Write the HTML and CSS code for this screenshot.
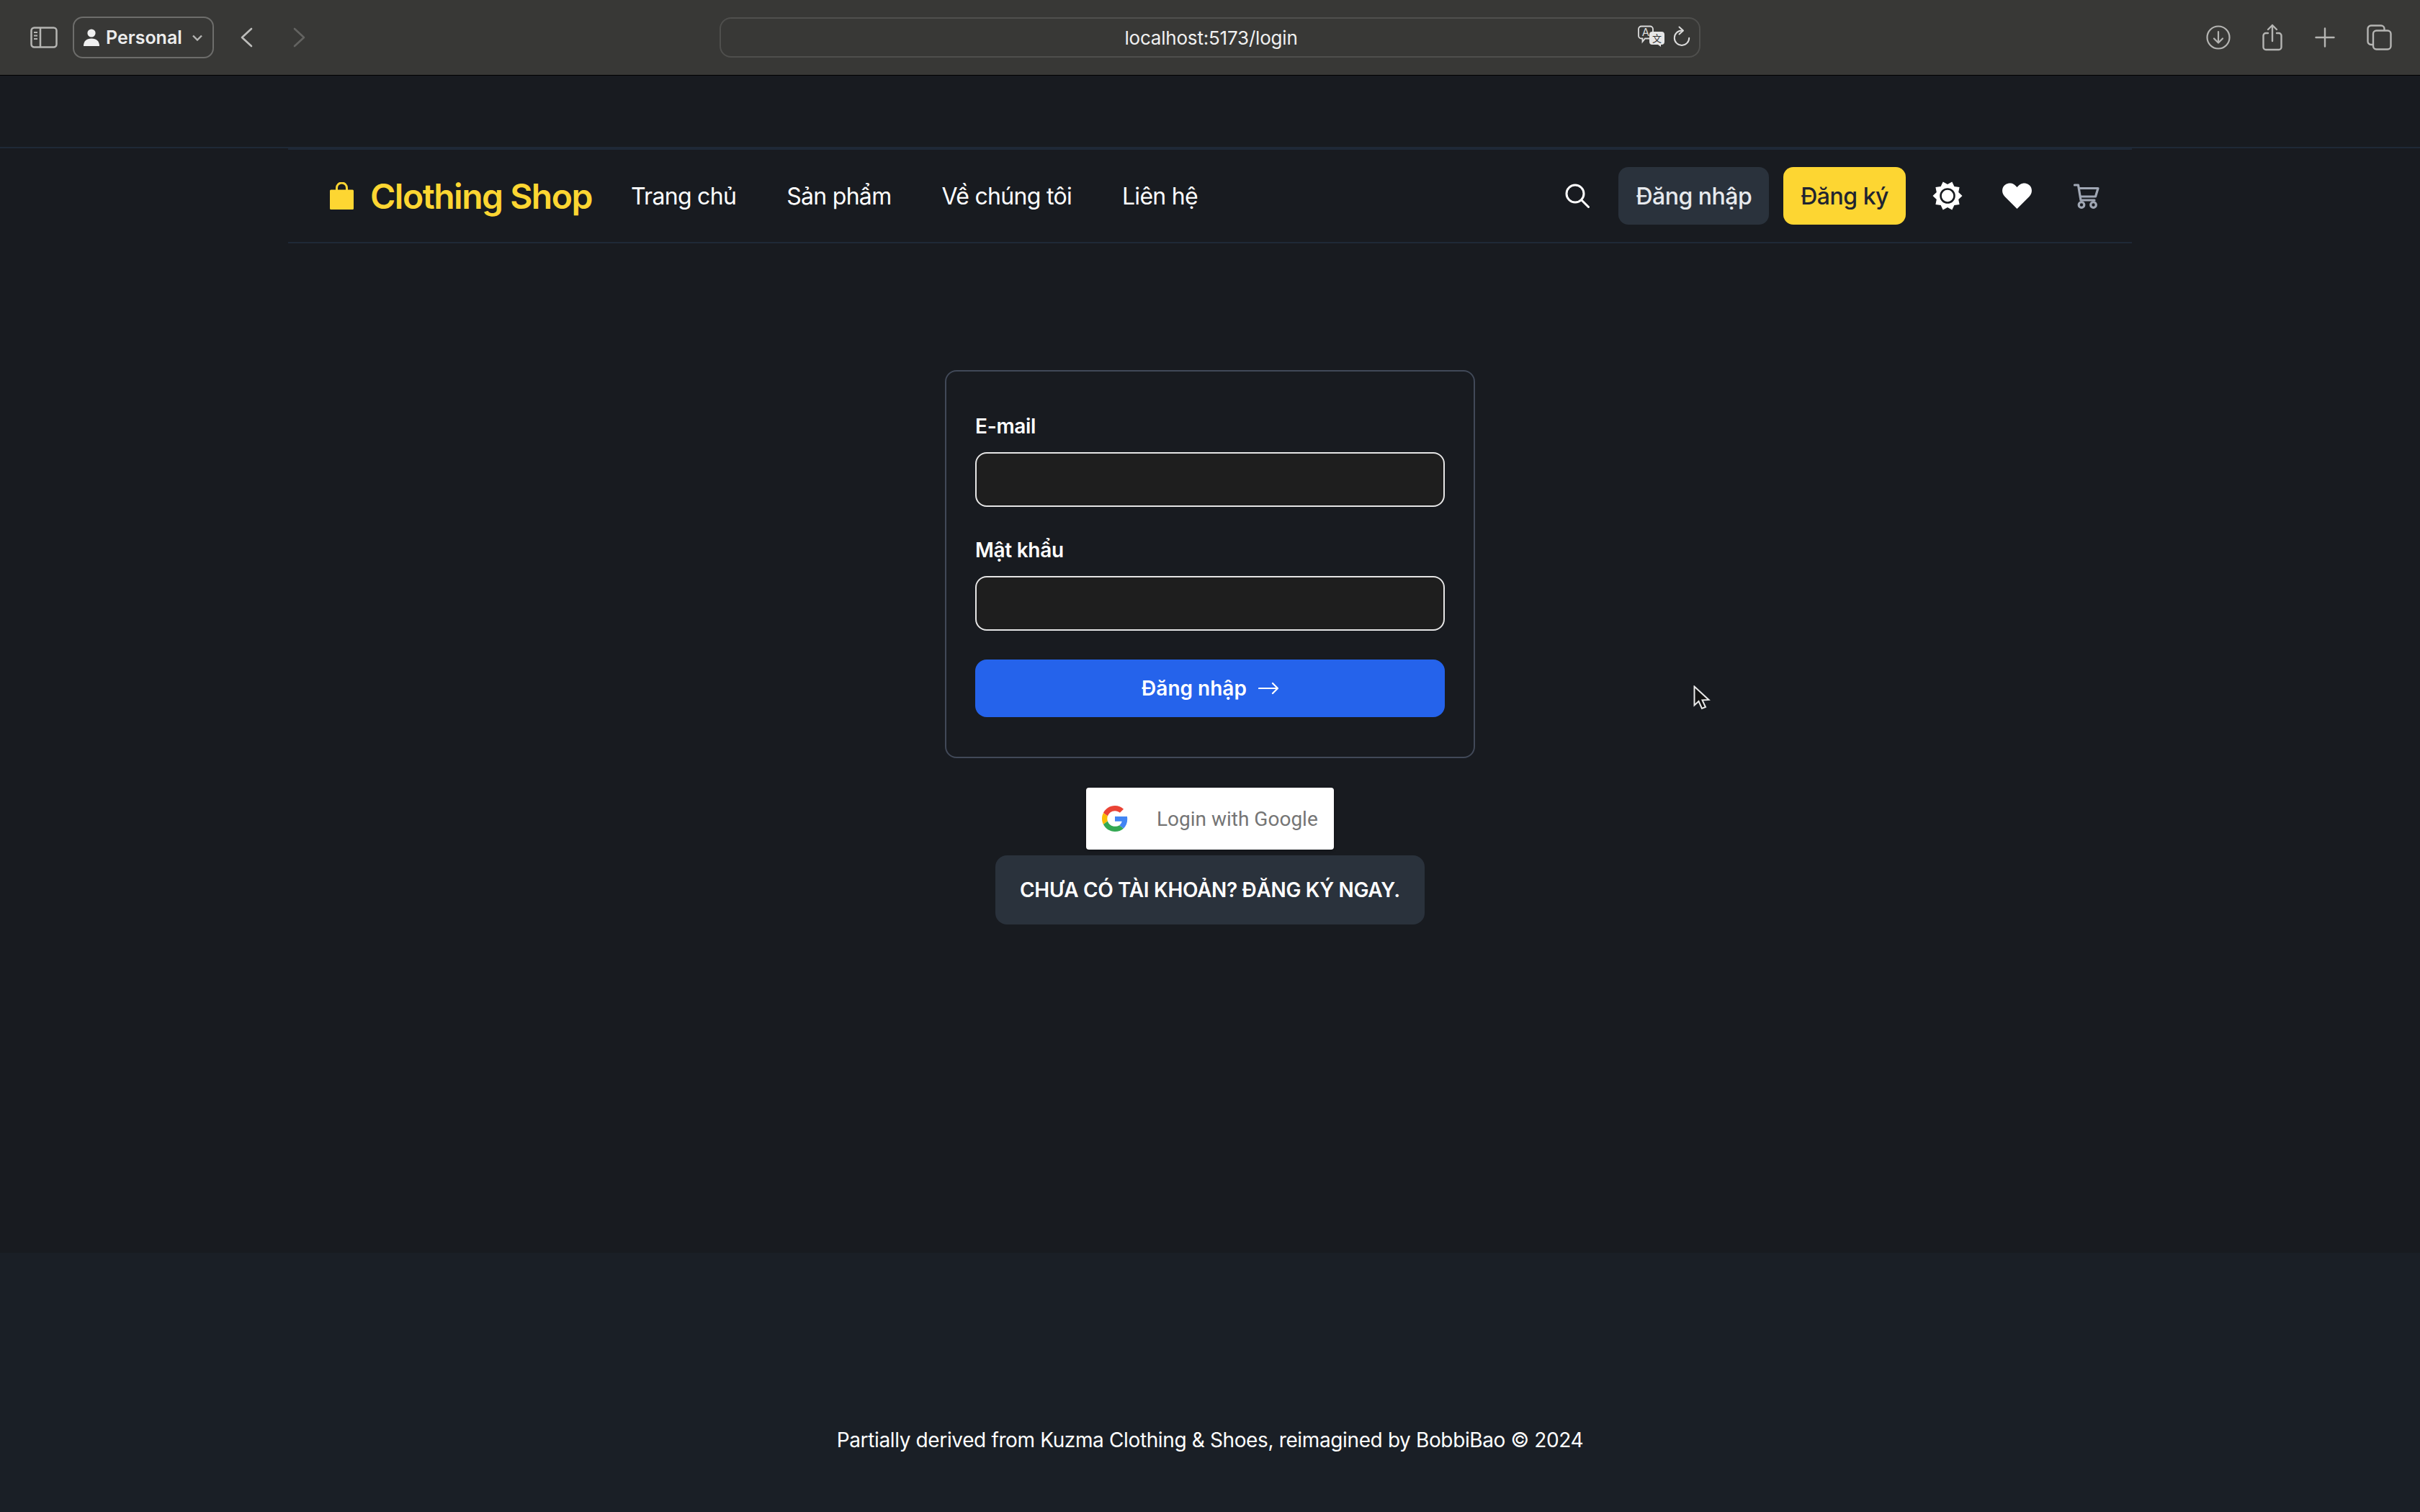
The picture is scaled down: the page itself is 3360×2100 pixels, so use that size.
FILE: index.html
```html
<!DOCTYPE html>
<html lang="vi">
<head>
    <meta charset="UTF-8">
    <meta name="viewport" content="width=device-width, initial-scale=1.0">
    <title>Clothing Shop</title>
    <link rel="stylesheet" href="styles.css">
</head>
<body>

    <div class="toolbar">
        <div class="toolbar-left">
            <svg class="tb-sidebar" width="38" height="30" viewBox="0 0 38 30" fill="none" stroke="#b5b5b3" stroke-width="2.5">
                <rect x="1.5" y="1.5" width="35" height="27" rx="4"/>
                <path d="M14 1.5v27"/>
                <path d="M5 8h5M5 12.5h5M5 17h5" stroke-width="2"/>
            </svg>
            <div class="profile">
                <svg width="22" height="24" viewBox="0 0 22 24" fill="#f0f0f0">
                    <circle cx="11" cy="6" r="5.6"/>
                    <path d="M0 24c0-7 4-10.500 11-10.500S22 17 22 24z"/>
                </svg>
                <span class="profile-name">Personal</span>
                <svg width="14" height="9" viewBox="0 0 14 9" fill="none" stroke="#b5b5b3" stroke-width="2.400">
                    <path d="M1 1.500l6 6 6-6"/>
                </svg>
            </div>
            <svg class="tb-back" width="17" height="28" viewBox="0 0 17 28" fill="none" stroke="#bdbdbb" stroke-width="2.600" stroke-linecap="round" stroke-linejoin="round">
                <path d="M15 2L2 14l13 12"/>
            </svg>
            <svg class="tb-forward" width="17" height="28" viewBox="0 0 17 28" fill="none" stroke="#636361" stroke-width="2.600" stroke-linecap="round" stroke-linejoin="round">
                <path d="M2 2l13 12L2 26"/>
            </svg>
        </div>

        <div class="address">
            <span class="address-url">localhost:5173/login</span>
            <div class="address-icons">
                <svg width="40" height="30" viewBox="0 0 40 30">
                    <path d="M6 1.500h12a4 4 0 0 1 4 4v9a4 4 0 0 1-4 4H11l-3.500 4.500v-4.500H6a4 4 0 0 1-4-4v-9a4 4 0 0 1 4-4z" fill="none" stroke="#dcdcdc" stroke-width="1.800"/>
                    <text class="tr-a" x="12" y="15" text-anchor="middle">A</text>
                    <path d="M21 9h13a4 4 0 0 1 4 4v10a4 4 0 0 1-4 4h-1v3l-4-3h-8a4 4 0 0 1-4-4V13a4 4 0 0 1 4-4z" fill="#e6e6e6"/>
                    <text class="tr-b" x="27.500" y="23" text-anchor="middle">文</text>
                </svg>
                <svg width="24" height="28" viewBox="0 0 24 28" fill="none" stroke="#dcdcdc" stroke-width="2" stroke-linecap="round" stroke-linejoin="round">
                    <path d="M12 6.500a10.200 10.200 0 1 0 10.200 10.200"/>
                    <path d="M8.500 1.500L14 6.500l-5.500 5"/>
                </svg>
            </div>
        </div>

        <div class="toolbar-right">
            <svg width="34" height="34" viewBox="0 0 34 34" fill="none" stroke="#b5b5b3" stroke-width="2.200" stroke-linecap="round" stroke-linejoin="round">
                <circle cx="17" cy="17" r="15.500"/>
                <path d="M17 9v15M11 18.500l6 6 6-6"/>
            </svg>
            <svg width="28" height="38" viewBox="0 0 28 38" fill="none" stroke="#b5b5b3" stroke-width="2.400" stroke-linecap="round" stroke-linejoin="round">
                <path d="M8 13H5a3.500 3.500 0 0 0-3.500 3.500v16A3.500 3.500 0 0 0 5 36h18a3.500 3.500 0 0 0 3.500-3.500v-16A3.500 3.500 0 0 0 23 13h-3"/>
                <path d="M14 24V2M8 8l6-6 6 6"/>
            </svg>
            <svg width="28" height="28" viewBox="0 0 28 28" fill="none" stroke="#b5b5b3" stroke-width="2.400" stroke-linecap="round">
                <path d="M14 1.500v25M1.500 14h25"/>
            </svg>
            <svg width="35" height="36" viewBox="0 0 35 36" fill="none" stroke="#b5b5b3" stroke-width="2.400" stroke-linejoin="round">
                <path d="M8 28H6a4.500 4.500 0 0 1-4.500-4.500V6A4.500 4.500 0 0 1 6 1.500h14A4.500 4.500 0 0 1 24.500 6v2"/>
                <rect x="9" y="8.500" width="24.500" height="26" rx="4.500"/>
            </svg>
        </div>
    </div>

    <div class="top-gap"></div>

    <header class="site-header">
        <nav class="navbar">
            <a class="logo">
                <svg width="33" height="38" viewBox="0 0 33 38" fill="#fdd632">
                    <path d="M9.500 12V8a7 7 0 0 1 14 0v4" fill="none" stroke="#fdd632" stroke-width="3"/>
                    <path d="M1.500 10.500h30a1.500 1.500 0 0 1 1.500 1.500v24.500a1.500 1.500 0 0 1-1.500 1.500h-30A1.500 1.500 0 0 1 0 36.500V12a1.500 1.500 0 0 1 1.500-1.500z"/>
                </svg>
                <span class="logo-text">Clothing Shop</span>
            </a>
            <div class="nav-links">
                <a>Trang chủ</a>
                <a>Sản phẩm</a>
                <a>Về chúng tôi</a>
                <a>Liên hệ</a>
            </div>
            <div class="nav-right">
                <svg class="nav-search" width="34" height="34" viewBox="0 0 34 34" fill="none" stroke="#fff" stroke-width="3" stroke-linecap="round">
                    <circle cx="14" cy="14" r="12"/>
                    <path d="M23 23l9.500 9.500"/>
                </svg>
                <button class="btn btn-dark">Đăng nhập</button>
                <button class="btn btn-yellow">Đăng ký</button>
                <svg class="nav-sun" width="42" height="40" viewBox="0 0 42 40">
                    <polygon fill="#fff" points="21,4 27.300,0.500 30.400,7.060 37.600,7.900 36.200,15.060 41.500,20 36.200,24.940 37.600,32.100 30.400,32.940 27.300,39.500 21,36 14.700,39.500 11.600,32.940 4.400,32.100 5.800,24.940 0.500,20 5.800,15.060 4.400,7.900 11.600,7.060 14.700,0.500"/>
                    <circle cx="21" cy="20" r="9.500" fill="none" stroke="#181b20" stroke-width="2.600"/>
                </svg>
                <svg class="nav-heart" width="41" height="36" viewBox="0 0 41 36" fill="#fff">
                    <path d="M20.500 36L3.500 19C-1 14.500-1 7.500 3 3.500s11-4 15 0l2.500 2.500L23 3.500c4-4 11-4 15 0s4 11-.5 15.500z"/>
                </svg>
                <svg class="nav-cart" width="36" height="35" viewBox="0 0 36 35" fill="none" stroke="#a0a7b4" stroke-width="3.200" stroke-linejoin="round" stroke-linecap="round">
                    <path d="M1.500 2h5l3.500 21h19"/>
                    <path d="M7.500 6.500H34l-3.500 11.500H9.500"/>
                    <circle cx="11" cy="29.500" r="3.800"/>
                    <circle cx="27.500" cy="29.500" r="3.800"/>
                </svg>
            </div>
        </nav>
    </header>

    <main class="login-page">
        <form class="login-card">
            <label class="field-label">E-mail</label>
            <div class="field-input"></div>
            <label class="field-label field-label-next">Mật khẩu</label>
            <div class="field-input"></div>
            <button type="button" class="submit-btn">
                Đăng nhập
                <svg width="28" height="18" viewBox="0 0 28 18" fill="none" stroke="#fff" stroke-width="2.200" stroke-linecap="round" stroke-linejoin="round">
                    <path d="M1 9h26M20 2l7 7-7 7"/>
                </svg>
            </button>
        </form>

        <button type="button" class="google-btn">
            <svg width="36" height="36" viewBox="0 0 48 48">
                <path fill="#EA4335" d="M24 9.500c3.540 0 6.710 1.220 9.210 3.600l6.850-6.850C35.900 2.380 30.470 0 24 0 14.620 0 6.510 5.380 2.560 13.220l7.980 6.190C12.430 13.720 17.740 9.500 24 9.500z"/>
                <path fill="#4285F4" d="M46.980 24.550c0-1.570-.15-3.090-.38-4.550H24v9.020h12.940c-.58 2.960-2.260 5.480-4.780 7.180l7.730 6c4.510-4.180 7.090-10.360 7.090-17.650z"/>
                <path fill="#FBBC05" d="M10.530 28.590c-.48-1.450-.76-2.990-.76-4.590s.27-3.140.76-4.590l-7.980-6.190C.92 16.460 0 20.120 0 24c0 3.880.92 7.540 2.560 10.780l7.970-6.190z"/>
                <path fill="#34A853" d="M24 48c6.480 0 11.930-2.130 15.890-5.810l-7.730-6c-2.150 1.450-4.920 2.300-8.160 2.300-6.260 0-11.570-4.220-13.470-9.910l-7.980 6.190C6.510 42.620 14.620 48 24 48z"/>
            </svg>
            <span>Login with Google</span>
        </button>

        <a class="register-link">CHƯA CÓ TÀI KHOẢN? ĐĂNG KÝ NGAY.</a>
    </main>

    <footer class="site-footer">
        <p>Partially derived from Kuzma Clothing &amp; Shoes, reimagined by BobbiBao © 2024</p>
    </footer>

    <svg class="cursor" width="24" height="34" viewBox="0 0 24 34">
        <path d="M1.500 1.500v26l6-5.500 4.500 10 5-2-4.500-9.500 9-.5z" fill="#111" stroke="#e8e8e8" stroke-width="2"/>
    </svg>

</body>
</html>
```

FILE: styles.css
```css
* {
    box-sizing: border-box;
}
html, body {
    height: 100%;
}
body {
    margin: 0;
    height: 2100px;
    display: flex;
    flex-direction: column;
    font-family: Inter, "Noto Sans", sans-serif;
    background-color: #181b20;
    color: #fff;
    overflow: hidden;
}
svg {
    display: block;
    flex: none;
}

/* browser bar */
.toolbar {
    height: 105px;
    flex: none;
    display: grid;
    grid-template-columns: 999px 1362px 1fr;
    align-items: center;
    background-color: #383836;
    border-bottom: 1px solid #000;
}
.toolbar-left {
    display: flex;
    align-items: center;
    padding-left: 42px;
}
.profile {
    width: 196px;
    height: 58px;
    margin-left: 21px;
    padding-left: 13px;
    display: flex;
    align-items: center;
    border: 2px solid #6d6d6b;
    border-radius: 14px;
    color: #ececec;
}
.profile-name {
    margin: 0 14px 0 9px;
    font-size: 25px;
    font-weight: 600;
}
.tb-back {
    margin-left: 37px;
}
.tb-forward {
    margin-left: 56px;
}
.address {
    height: 56px;
    padding-left: 3px;
    display: flex;
    align-items: center;
    justify-content: center;
    position: relative;
    border: 2px solid #4f4f4d;
    border-radius: 16px;
}
.address-url {
    font-size: 26px;
    letter-spacing: -0.2px;
    color: #f0f0f0;
}
.address-icons {
    position: absolute;
    right: 12px;
    top: 9px;
    display: flex;
    align-items: center;
    gap: 10px;
}
.tr-a {
    font-size: 15px;
    fill: #dcdcdc;
}
.tr-b {
    font-size: 13px;
    font-family: "Noto Sans CJK SC", sans-serif;
    fill: #333;
}
.toolbar-right {
    display: flex;
    align-items: center;
    justify-content: flex-end;
    gap: 44.5px;
    padding-right: 39px;
}

.top-gap {
    height: 99px;
    flex: none;
}

/* site nav */
.site-header {
    flex: none;
    border-top: 2px solid #1f2937;
}
.navbar {
    width: 2560px;
    height: 132px;
    margin: 0 auto;
    padding-left: 58px;
    display: flex;
    align-items: center;
    border-top: 2px solid #1f2937;
    border-bottom: 2px solid #1f2937;
}
.logo {
    display: flex;
    align-items: center;
    gap: 23px;
}
.logo-text {
    font-size: 48px;
    font-weight: 600;
    letter-spacing: -1.5px;
    color: #fdd632;
}
.nav-links {
    display: flex;
    gap: 70px;
    margin-left: 54px;
    font-size: 32px;
    letter-spacing: -0.7px;
}
.nav-right {
    margin-left: auto;
    display: flex;
    align-items: center;
}
.btn {
    height: 80px;
    padding: 0 24px;
    border: none;
    border-radius: 14px;
    font-family: inherit;
    font-size: 32px;
    font-weight: 500;
    letter-spacing: -0.5px;
}
.btn-dark {
    margin-left: 40px;
    background-color: #2a323c;
    color: #e7eaee;
}
.btn-yellow {
    margin-left: 20px;
    background-color: #fdd632;
    color: #1f2430;
}
.nav-sun {
    margin-left: 37px;
}
.nav-heart {
    margin-left: 55px;
}
.nav-cart {
    margin-left: 58px;
    margin-right: 45px;
}

/* login */
.login-page {
    flex: 1;
    display: flex;
    flex-direction: column;
    align-items: center;
    padding-top: 176px;
}
.login-card {
    width: 736px;
    padding: 40px 40px 55px;
    border: 2px solid #414958;
    border-radius: 16px;
}
.field-label {
    display: flex;
    align-items: center;
    height: 72px;
    font-size: 28px;
    font-weight: 600;
    letter-spacing: -0.3px;
}
.field-label-next {
    margin-top: 24px;
}
.field-input {
    height: 76px;
    background-color: #1e1e1e;
    border: 2px solid #e5e5e5;
    border-radius: 16px;
}
.submit-btn {
    width: 100%;
    height: 80px;
    margin-top: 40px;
    display: flex;
    align-items: center;
    justify-content: center;
    gap: 16px;
    border: none;
    border-radius: 16px;
    background-color: #2563eb;
    color: #fff;
    font-family: inherit;
    font-size: 28px;
    font-weight: 600;
}
.google-btn {
    width: 344px;
    height: 86px;
    margin-top: 41px;
    padding: 0 22px;
    display: flex;
    align-items: center;
    gap: 40px;
    border: none;
    border-radius: 4px;
    background-color: #fff;
    color: #757575;
    font-family: Roboto, sans-serif;
    font-size: 28px;
    box-shadow: 0 1px 4px rgba(0, 0, 0, 0.3);
}
.register-link {
    width: 596px;
    height: 96px;
    margin-top: 8px;
    display: flex;
    align-items: center;
    justify-content: center;
    border-radius: 16px;
    background-color: #2a323c;
    font-size: 28px;
    font-weight: 600;
    letter-spacing: -0.33px;
}

.site-footer {
    height: 360px;
    flex: none;
    padding-top: 240px;
    background-color: #1a1f26;
    text-align: center;
    font-size: 28px;
    letter-spacing: -0.37px;
    line-height: 40px;
}
.site-footer p {
    margin: 0;
}

/* mouse pointer sitting over the page */
.cursor {
    position: absolute;
    left: 2351px;
    top: 952px;
}
```
